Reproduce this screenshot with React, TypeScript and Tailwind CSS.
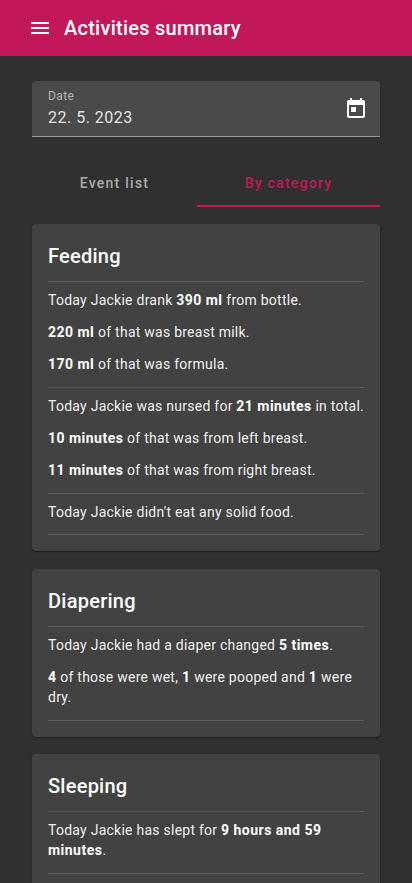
import type { ReactNode } from "react";

function Rule() {
  return <div className="h-px shrink-0 bg-[#5a5a5a]" />;
}

function Line({ children }: { children: ReactNode }) {
  return <p className="-mr-2 pr-1 text-sm leading-5 tracking-[0.25px] text-white/95">{children}</p>;
}

function Strong({ children }: { children: ReactNode }) {
  return <b className="tracking-[0.48px] text-white">{children}</b>;
}

function Card({ title, className, children }: { title: string; className: string; children: ReactNode }) {
  return (
    <section className={`rounded bg-[#424242] px-4 pt-4 shadow-[0_2px_1px_-1px_rgba(0,0,0,0.2),0_1px_1px_rgba(0,0,0,0.14),0_1px_3px_rgba(0,0,0,0.12)] ${className}`}>
      <h2 className="mb-[9.4px] text-xl leading-8 font-medium tracking-[0.25px]">{title}</h2>
      {children}
    </section>
  );
}

function Group({ children }: { children: ReactNode }) {
  return (
    <>
      <Rule />
      <div className="flex flex-col gap-3 pt-2 pb-[12.6px]">{children}</div>
    </>
  );
}

export default function App() {
  return (
    <div className="h-[883px] overflow-hidden bg-[#303030] font-['Roboto',sans-serif] text-white">
      <header className="flex h-14 items-center gap-3 bg-[#c2185b] pl-7">
        <svg className="size-6" viewBox="0 0 24 24" fill="currentColor">
          <path d="M3 18h18v-2H3v2zm0-5h18v-2H3v2zm0-7v2h18V6H3z" />
        </svg>
        <h1 className="text-xl font-medium tracking-[0.25px]">Activities summary</h1>
      </header>
      <main className="px-8 pt-[25px]">
        <div className="flex h-14 items-center justify-between rounded-t border-b border-[#949494] bg-[#4a4a4a] pr-3 pl-4">
          <div className="pt-px">
            <div className="text-xs leading-4 tracking-[0.4px] text-white/60">Date</div>
            <div className="mt-0.5 text-base leading-6 tracking-[0.5px] text-white/87">22. 5. 2023</div>
          </div>
          <svg className="size-6" viewBox="0 0 24 24" fill="currentColor">
            <path d="M19 3h-1V1h-2v2H8V1H6v2H5c-1.11 0-1.99.9-1.99 2L3 19c0 1.1.89 2 2 2h14c1.1 0 2-.9 2-2V5c0-1.1-.9-2-2-2zm0 16H5V8h14v11zM7 10h5v5H7z" />
          </svg>
        </div>
        <nav className="mt-[22px] flex h-12 text-center text-sm leading-[48px] font-medium tracking-[1.25px]">
          <div className="w-[165px] text-white/60">Event list</div>
          <div className="flex-1 border-b-2 border-[#c2185b] text-[#c2185b]">By category</div>
        </nav>
        <Card title="Feeding" className="mt-[17px] h-[327px]">
          <Group>
            <Line>Today Jackie drank <Strong>390 ml</Strong> from bottle.</Line>
            <Line><Strong>220 ml</Strong> of that was breast milk.</Line>
            <Line><Strong>170 ml</Strong> of that was formula.</Line>
          </Group>
          <Group>
            <Line>Today Jackie was nursed for <Strong>21 minutes</Strong> in total.</Line>
            <Line><Strong>10 minutes</Strong> of that was from left breast.</Line>
            <Line><Strong>11 minutes</Strong> of that was from right breast.</Line>
          </Group>
          <Group>
            <Line>Today Jackie didn't eat any solid food.</Line>
          </Group>
          <Rule />
        </Card>
        <Card title="Diapering" className="mt-[18px] h-[168px]">
          <Group>
            <Line>Today Jackie had a diaper changed <Strong>5 times</Strong>.</Line>
            <Line><Strong>4</Strong> of those were wet, <Strong>1</Strong> were pooped and <Strong>1</Strong> were dry.</Line>
          </Group>
          <Rule />
        </Card>
        <Card title="Sleeping" className="mt-[17px] h-[168px]">
          <Group>
            <Line>Today Jackie has slept for <Strong>9 hours and 59 minutes</Strong>.</Line>
          </Group>
          <Rule />
        </Card>
      </main>
    </div>
  );
}
